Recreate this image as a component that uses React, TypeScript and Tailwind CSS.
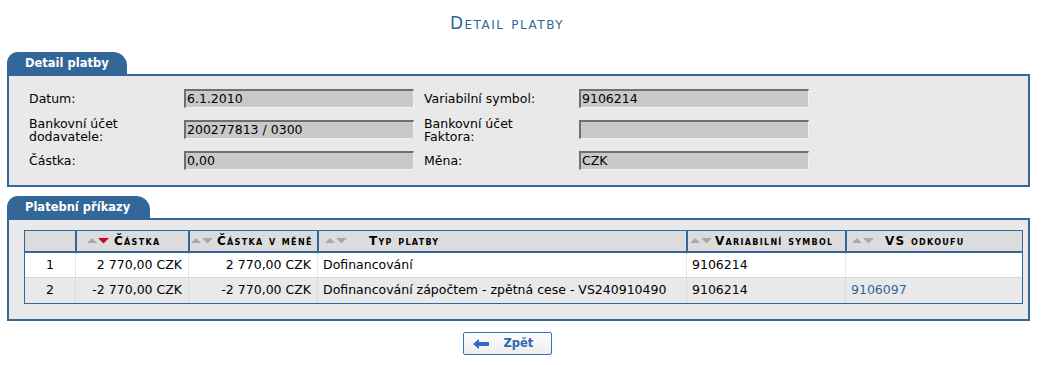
import React from 'react'

const font = "font-['DejaVu_Sans','Verdana',sans-serif]"

function SortArrows({ active }: { active?: boolean }) {
  return (
    <svg width="22" height="6" viewBox="0 0 22 6" className="shrink-0">
      <polygon points="0,5 5,0 10,5" fill="#a9a9a9" />
      <polygon points="11,0 22,0 16.5,5.5" fill={active ? '#cc0033' : '#a9a9a9'} />
    </svg>
  )
}

function Field({ label, value }: { label: React.ReactNode; value: string }) {
  return (
    <>
      <div className="text-[12.5px] leading-[13px] text-black h-[19px] flex items-center">{label}</div>
      <div className="h-[19px] bg-[#c9c9c9] border-t-2 border-l-2 border-t-[#6f6f6f] border-l-[#6f6f6f] border-b border-r border-b-[#f2f2f2] border-r-[#f2f2f2] text-[12.5px] leading-[16px] pl-[1px] text-black">
        {value}
      </div>
    </>
  )
}

function Tab({ children, w }: { children: React.ReactNode; w: string }) {
  return (
    <div className={`h-[22px] ${w} bg-[#336699] rounded-tl-[11px] rounded-tr-[14px] text-white font-bold text-[11.5px] leading-[22px] pl-[18px]`}>
      {children}
    </div>
  )
}

const headers = [
  { t: '', pl: '', gap: '' },
  { t: 'Částka', pl: 'pl-[10px]', gap: 'ml-[5px]', active: true },
  { t: 'Částka v měně', pl: 'pl-[1px]', gap: 'ml-[4px]' },
  { t: 'Typ platby', pl: 'pl-[6px]', gap: 'ml-[22px]' },
  { t: 'Variabilní symbol', pl: 'pl-[2px]', gap: 'ml-[3px]' },
  { t: 'VS odkoufu', pl: 'pl-[5px]', gap: 'ml-[11px]' },
]

const rows = [
  ['1', '2 770,00 CZK', '2 770,00 CZK', 'Dofinancování', '9106214', ''],
  ['2', '-2 770,00 CZK', '-2 770,00 CZK', 'Dofinancování zápočtem - zpětná cese - VS240910490', '9106214', '9106097'],
]

export default function App() {
  return (
    <div className={`w-[1042px] h-[365px] bg-white ${font} text-black`}>
      {/* Title */}
      <div className="h-[52px] pr-[28px] pt-[12px] text-center text-[#336699] text-[17px] leading-[22px] [font-variant:small-caps] tracking-[1.5px]">
        Detail platby
      </div>

      {/* Detail platby */}
      <div className="ml-[7px] w-[1023px]">
        <Tab w="w-[120px]">Detail platby</Tab>
        <div className="h-[113px] border-2 border-[#336699] bg-[#e9e9e9] pt-[13px] pl-[20px]">
          <div className="grid grid-cols-[155px_230px_10px_155px_230px] gap-y-[12px]">
            <Field label="Datum:" value="6.1.2010" />
            <div />
            <Field label="Variabilní symbol:" value="9106214" />
            <Field label={<span>Bankovní účet<br />dodavatele:</span>} value="200277813 / 0300" />
            <div />
            <Field label={<span>Bankovní účet<br />Faktora:</span>} value="" />
            <Field label="Částka:" value="0,00" />
            <div />
            <Field label="Měna:" value="CZK" />
          </div>
        </div>
      </div>

      {/* Platební příkazy */}
      <div className="ml-[7px] w-[1023px] mt-[9px]">
        <Tab w="w-[143px]">Platební příkazy</Tab>
        <div className="h-[103px] border-2 border-[#336699] bg-[#e9e9e9] pt-[10px] pl-[15px]">
          <div className="w-[999px] border border-[#336699] text-[12.5px]">
            <div className="grid grid-cols-[50px_113px_129px_369px_159px_177px] h-[22px] bg-[#dcdcdc] border-b-2 border-[#336699]">
              {headers.map((h, i) => (
                <div
                  key={i}
                  className={`flex items-center ${h.pl} ${i > 0 ? 'border-l-2 border-[#336699]' : ''} font-bold text-[12px] [font-variant:small-caps] tracking-[1.3px] whitespace-nowrap overflow-hidden`}
                >
                  {i > 0 && <SortArrows active={h.active} />}
                  {h.t && <span className={h.gap}>{h.t}</span>}
                </div>
              ))}
            </div>
            {rows.map((r, ri) => (
              <div
                key={ri}
                className={`grid grid-cols-[50px_113px_129px_369px_159px_177px] h-[25px] ${ri === 0 ? 'bg-white border-b border-[#d6d6d6]' : 'bg-[#e9e9e9]'}`}
              >
                {r.map((c, ci) => (
                  <div
                    key={ci}
                    className={`flex items-center whitespace-nowrap ${ci > 0 ? 'border-l border-dotted border-[#cfcfcf]' : ''} ${
                      ci === 0 ? 'justify-center' : ci < 3 ? 'justify-end pr-[6px]' : 'pl-[5px]'
                    } ${ci === 5 ? 'text-[#336699]' : ''}`}
                  >
                    {c}
                  </div>
                ))}
              </div>
            ))}
          </div>
        </div>
      </div>

      {/* Button */}
      <div className="flex justify-center pr-[28px] mt-[11px]">
        <button className="w-[89px] h-[23px] border border-[#3b6fc2] rounded-[2px] bg-gradient-to-b from-white to-[#ececec] flex items-center pl-[9px] gap-[15px] text-[#3366aa] font-bold text-[11.5px]">
          <svg width="16" height="10" viewBox="0 0 16 10">
            <polygon points="0,5 6,0 6,3 16,3 16,7 6,7 6,10" fill="#3366cc" />
          </svg>
          <span>Zpět</span>
        </button>
      </div>
    </div>
  )
}
